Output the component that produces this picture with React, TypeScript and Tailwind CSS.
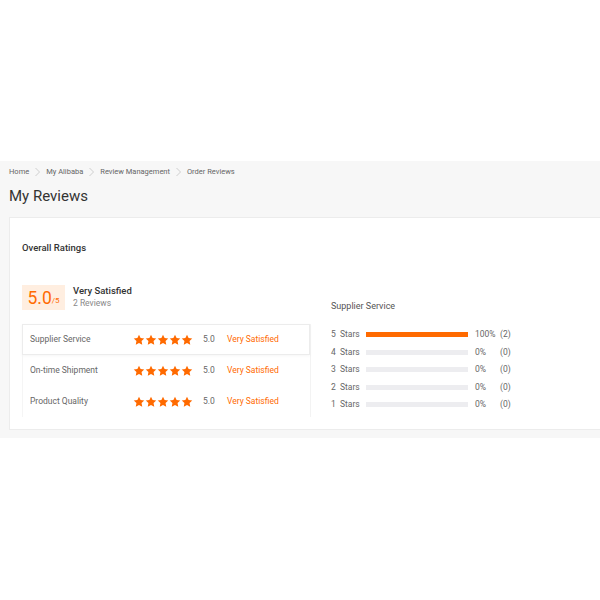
import React from "react";

const Star = () => (
  <svg width="12" height="12" viewBox="0 0 24 24" className="block">
    <path
      d="M12 1.5l3.2 6.7 7.3.9-5.4 5.1 1.4 7.3L12 18l-6.5 3.5 1.4-7.3-5.4-5.1 7.3-.9z"
      fill="#ff6a00"
    />
  </svg>
);

const Chevron = () => (
  <svg width="7" height="10" viewBox="0 0 7 10" className="mx-[5px] block">
    <path d="M1.5 1l4 4-4 4" fill="none" stroke="#c8c8c8" strokeWidth="0.9" />
  </svg>
);

const rows = ["Supplier Service", "On-time Shipment", "Product Quality"];
const dist = [
  { s: 5, p: 100, c: 2 },
  { s: 4, p: 0, c: 0 },
  { s: 3, p: 0, c: 0 },
  { s: 2, p: 0, c: 0 },
  { s: 1, p: 0, c: 0 },
];

export default function App() {
  return (
    <div className="w-[600px] h-[600px] bg-white overflow-hidden" style={{ fontFamily: "Roboto, 'Liberation Sans', sans-serif" }}>
      <div className="h-[161px]" />
      <div className="bg-[#f7f7f7] pt-[5px] pb-[8px]">
        <div className="flex items-center h-[12px] pl-[9px] text-[7.5px] leading-[12px] text-[#666]">
          <span>Home</span>
          <Chevron />
          <span>My Alibaba</span>
          <Chevron />
          <span>Review Management</span>
          <Chevron />
          <span>Order Reviews</span>
        </div>
        <div className="h-[24px] mt-[6px] pl-[9px] text-[15px] leading-[24px] text-[#333]">My Reviews</div>
        <div className="ml-[9px] mt-[9px] h-[213px] bg-white border border-[#ececec] border-r-0 pl-[12px] pt-[24px]">
          <div className="h-[12px] text-[9.5px] leading-[12px] font-medium text-[#333]">Overall Ratings</div>
          <div className="flex mt-[31px]">
            <div className="w-[289px]">
              <div className="flex items-start h-[25px]">
                <div className="w-[43px] h-[25px] bg-[#ffeee0] flex items-end justify-center pb-[2px]">
                  <span className="text-[17.5px] leading-[20px] text-[#ff6a00]">5.0</span>
                  <span className="text-[8px] leading-[12px] text-[#ff6a00] pb-[1px]">/5</span>
                </div>
                <div className="ml-[8px] flex flex-col">
                  <span className="text-[9.5px] leading-[12px] font-medium text-[#333]">Very Satisfied</span>
                  <span className="text-[8.5px] leading-[13px] text-[#888]">2 Reviews</span>
                </div>
              </div>
              <div className="mt-[14px] border-r border-[#f3f3f3]">
                {rows.map((r, i) => (
                  <div
                    key={r}
                    className={
                      "flex items-center h-[31px] text-[8.5px] " +
                      (i === 0
                        ? "border border-[#ececec] shadow-[0_1px_3px_rgba(0,0,0,0.04)] pl-[7px]"
                        : "border-l border-[#f5f5f5] pl-[7px]")
                    }
                  >
                    <span className="w-[103px] text-[#666]">{r}</span>
                    <span className="flex">
                      <Star />
                      <Star />
                      <Star />
                      <Star />
                      <Star />
                    </span>
                    <span className="ml-[10px] w-[24px] text-[#666]">5.0</span>
                    <span className="text-[#ff6a00]">Very Satisfied</span>
                  </div>
                ))}
              </div>
            </div>
            <div className="ml-[20px] pt-[15px]">
              <div className="h-[12px] text-[9px] leading-[12px] text-[#555]">Supplier Service</div>
              <div className="mt-[14px]">
                {dist.map((d) => (
                  <div key={d.s} className="flex items-center h-[17.5px] text-[8.5px] text-[#666]">
                    <span className="w-[35px]">
                      {d.s}&nbsp; Stars
                    </span>
                    <div className="w-[102px] h-[5px] bg-[#ededf0]">
                      <div className="h-full bg-[#ff6a00]" style={{ width: `${d.p}%` }} />
                    </div>
                    <span className="ml-[7px] w-[25px]">{d.p}%</span>
                    <span>({d.c})</span>
                  </div>
                ))}
              </div>
            </div>
          </div>
        </div>
      </div>
    </div>
  );
}
